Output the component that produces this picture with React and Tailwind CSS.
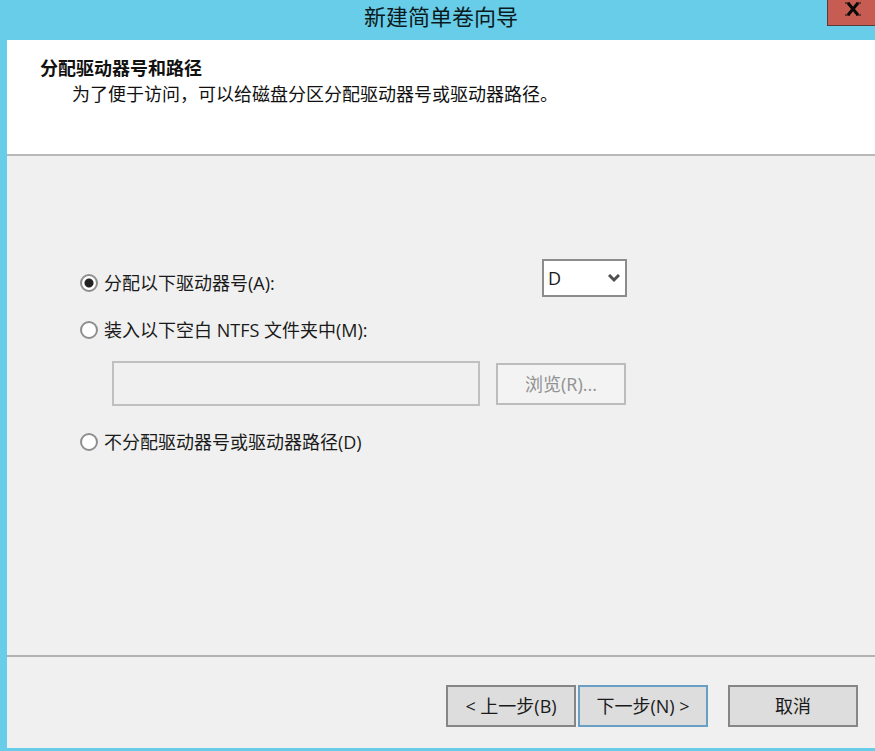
import React, { useState } from 'react';

const driveLetters = ['D', 'E', 'F', 'G', 'H'];

// Shared look for the grey wizard buttons
const buttonClass = 'h-[42px] w-[130px] border-2 bg-[#dddddd] text-[18px] leading-6 whitespace-nowrap';

function RadioOption({ value, selected, onSelect, children }) {
  return (
    <label className="flex items-center gap-[6px] text-[18px] leading-7">
      <input
        type="radio"
        name="assignment"
        value={value}
        checked={selected === value}
        onChange={() => onSelect(value)}
        className="size-[18px] shrink-0 appearance-none rounded-full border-2 border-[#8f8f8f] bg-white checked:bg-[radial-gradient(circle,#222222_4px,#ffffff_5px)]"
      />
      {children}
    </label>
  );
}

export default function App() {
  const [assignment, setAssignment] = useState('letter');
  const [letter, setLetter] = useState('D');
  const [folder, setFolder] = useState('');

  const folderDisabled = assignment !== 'folder';

  return (
    <div className="flex min-h-screen flex-col bg-[#68cde9] pb-[3px] pl-[7px] font-['Open_Sans','Noto_Sans_CJK_SC',sans-serif] text-[#1a1a1a]">
      {/* Title bar */}
      <div className="grid h-10 grid-cols-[1fr_auto_1fr] items-start">
        <h1 className="col-start-2 text-[22px] leading-8 text-[#0b1a20]">新建简单卷向导</h1>
        <button
          type="button"
          aria-label="关闭"
          className="flex h-[26px] w-12 items-start justify-center justify-self-end border-b border-l border-[#5b3a3a] bg-[#c75c52] pt-[2px] pl-[3px]"
        >
          <svg width="16" height="14" viewBox="0 0 16 14" fill="none" stroke="#0a0a0a">
            <path d="M3 1 L13 13 M13 1 L3 13" strokeWidth="3" />
            <path d="M0 1 H5 M11 1 H16 M0 13 H5 M11 13 H16" strokeWidth="1" />
          </svg>
        </button>
      </div>

      <div className="flex flex-1 flex-col bg-[#f0f0f0]">
        {/* Page heading */}
        <header className="h-[116px] border-b-2 border-[#b8b8b8] bg-white pt-[15px] pl-[33px] text-[18px] leading-[26px] text-[#111111]">
          <h2 className="font-bold">分配驱动器号和路径</h2>
          <p className="pl-8">为了便于访问，可以给磁盘分区分配驱动器号或驱动器路径。</p>
        </header>

        {/* Options */}
        <main className="flex-1 pt-[103px] pb-8 pl-[73px]">
          <div className="flex w-[547px] items-end justify-between">
            <RadioOption value="letter" selected={assignment} onSelect={setAssignment}>
              分配以下驱动器号(A):
            </RadioOption>
            <div className="relative">
              <select
                aria-label="驱动器号"
                value={letter}
                onChange={(e) => setLetter(e.target.value)}
                disabled={assignment !== 'letter'}
                className="block h-[38px] w-[85px] appearance-none border-2 border-[#8c8c8c] bg-white pl-1 text-[18px]"
              >
                {driveLetters.map((d) => (
                  <option key={d}>{d}</option>
                ))}
              </select>
              <svg
                className="pointer-events-none absolute top-[15px] right-[7px]"
                width="12"
                height="9"
                viewBox="0 0 12 9"
                fill="none"
                stroke="#505050"
                strokeWidth="3"
              >
                <path d="M1 1 L6 6 L11 1" />
              </svg>
            </div>
          </div>

          <div className="mt-[19px] flex">
            <RadioOption value="folder" selected={assignment} onSelect={setAssignment}>
              装入以下空白 NTFS 文件夹中(M):
            </RadioOption>
          </div>

          <div className="mt-[17px] flex items-center gap-4 pl-8">
            <input
              type="text"
              aria-label="NTFS 文件夹"
              value={folder}
              onChange={(e) => setFolder(e.target.value)}
              disabled={folderDisabled}
              className="h-[45px] w-[368px] border-2 border-[#c0c0c0] bg-[#f0f0f0] px-2 text-[18px]"
            />
            <button
              type="button"
              disabled={folderDisabled}
              className="h-[42px] w-[130px] border-2 border-[#bcbcbc] bg-[#f3f3f3] text-[18px] leading-6 text-[#919191]"
            >
              浏览(R)...
            </button>
          </div>

          <div className="mt-[22px] flex">
            <RadioOption value="none" selected={assignment} onSelect={setAssignment}>
              不分配驱动器号或驱动器路径(D)
            </RadioOption>
          </div>
        </main>

        {/* Wizard navigation */}
        <footer className="flex h-[93px] justify-end border-t-2 border-[#b2b2b2] pt-7 pr-[17px]">
          <button type="button" className={`${buttonClass} mr-[2px] border-[#868686]`}>
            &lt; 上一步(B)
          </button>
          <button type="button" className={`${buttonClass} mr-5 border-[#689fc2]`}>
            下一步(N) &gt;
          </button>
          <button type="button" className={`${buttonClass} border-[#868686]`}>
            取消
          </button>
        </footer>
      </div>
    </div>
  );
}
